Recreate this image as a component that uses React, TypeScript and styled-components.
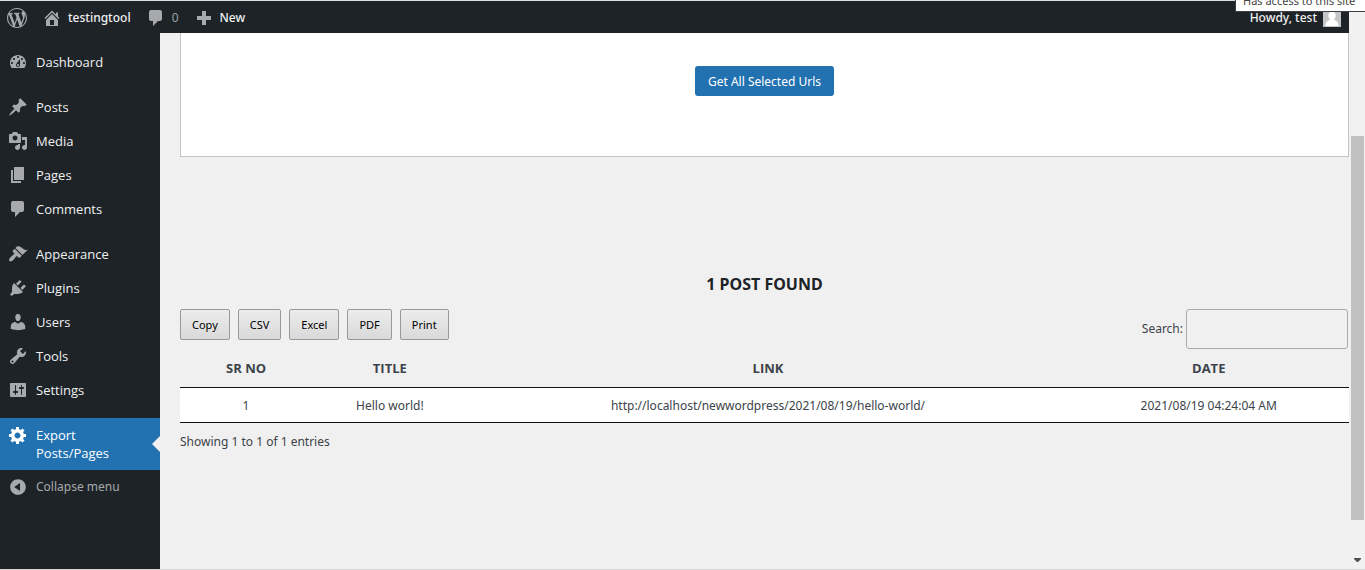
import React from "react";
import styled, { createGlobalStyle } from "styled-components";

const textFont = `"Noto Sans", "Open Sans", sans-serif`;
const menuFont = `"Open Sans", "Noto Sans", sans-serif`;

const GlobalStyle = createGlobalStyle`
  *, *::before, *::after { box-sizing: border-box; }
  body {
    margin: 0;
    background: #f0f0f1;
    color: #3c434a;
    font-family: ${textFont};
    font-size: 12px;
    line-height: 18px;
  }
  a { color: inherit; text-decoration: none; }
  ul { list-style: none; margin: 0; padding: 0; }
`;

const Window = styled.div`
  display: flex;
  min-height: 100vh;
  border-top: 1px solid #dcdfe1;
  border-bottom: 1px solid #d5d5d6;
  background: #f0f0f0;
`;

const Screen = styled.div`
  flex: 1;
  min-width: 0;
  display: flex;
  flex-direction: column;
`;

const AdminBar = styled.header`
  display: flex;
  align-items: center;
  height: 32px;
  padding: 1px 8px 0 7px;
  background: #1d2327;
  color: #f0f0f1;
`;

const BarLink = styled.a<{ $muted?: boolean }>`
  display: flex;
  align-items: center;
  gap: 6px;
  margin-right: 15px;
  font-weight: ${(p) => (p.$muted ? 400 : 500)};
  color: ${(p) => (p.$muted ? "#9ca2a7" : "#f0f0f1")};
  svg { color: #a7aaad; }
`;

const Account = styled(BarLink)`
  margin: 0 0 0 auto;
`;

const Avatar = styled.svg`
  display: block;
  width: 18px;
  height: 18px;
`;

const Glyph = styled.svg`
  display: block;
  flex: none;
  width: 20px;
  height: 20px;
  fill: currentColor;
`;

const Body = styled.div`
  flex: 1;
  display: flex;
`;

const Sidebar = styled.nav`
  flex: none;
  width: 160px;
  padding-top: 12px;
  background: #1d2327;
`;

const MenuGroup = styled.ul`
  margin-bottom: 11px;
`;

const menuRow = `
  position: relative;
  display: flex;
  align-items: flex-start;
  gap: 8px;
  width: 100%;
  padding: 8px 24px 8px 8px;
  border: 0;
  line-height: 18px;
  text-align: left;
`;

const MenuLink = styled.a<{ $current?: boolean }>`
  ${menuRow}
  font-family: ${menuFont};
  font-size: 13px;
  font-weight: 500;
  background: ${(p) => (p.$current ? "#2271b1" : "transparent")};
  color: ${(p) => (p.$current ? "#fff" : "#f0f0f1")};
  svg { margin: -1px 0; color: ${(p) => (p.$current ? "#fff" : "#a7aaad")}; }
  &::after {
    content: "";
    display: ${(p) => (p.$current ? "block" : "none")};
    position: absolute;
    right: 0;
    top: 18px;
    border: 8px solid transparent;
    border-left-width: 0;
    border-right-color: #f0f0f0;
  }
`;

const CollapseButton = styled.button`
  ${menuRow}
  font-family: inherit;
  font-size: 12px;
  background: transparent;
  color: #a7aaad;
  svg { margin: -1px 0; }
`;

const Content = styled.main`
  flex: 1;
  min-width: 0;
  padding-left: 20px;
`;

const Panel = styled.section`
  display: flex;
  justify-content: center;
  padding: 33px 0 60px;
  border: 1px solid #c3c4c7;
  border-top: 0;
  background: #fff;
`;

const PrimaryButton = styled.button`
  height: 30px;
  padding: 0 13px;
  border: 0;
  border-radius: 3px;
  background: #2271b1;
  color: #fff;
  font-family: inherit;
  font-size: 12px;
`;

const Heading = styled.h1`
  margin: 115px 0 13px;
  color: #1d2327;
  font-size: 16px;
  line-height: 24px;
  font-weight: 700;
  text-align: center;
`;

const Toolbar = styled.div`
  display: flex;
  justify-content: space-between;
  align-items: flex-start;
`;

const Exports = styled.div`
  display: flex;
  gap: 8px;
`;

const ExportButton = styled.button`
  height: 31px;
  padding: 0 11px;
  border: 1px solid #999;
  border-radius: 2px;
  background: linear-gradient(to bottom, #ececec 0%, #d9d9d9 100%);
  color: #000;
  font-family: inherit;
  font-size: 11px;
`;

const Search = styled.label`
  display: flex;
  align-items: center;
  gap: 3px;
  padding-right: 1px;
`;

const SearchInput = styled.input`
  width: 162px;
  height: 40px;
  padding: 5px;
  border: 1px solid #aaa;
  border-radius: 3px;
  background: transparent;
  font: inherit;
`;

const Table = styled.table`
  width: 100%;
  border-collapse: collapse;
  table-layout: fixed;
  text-align: center;
  border-bottom: 1px solid #111;
`;

const HeadCell = styled.th<{ $width: string }>`
  width: ${(p) => p.$width};
  padding: 10px;
  border-bottom: 1px solid #111;
  font-family: ${menuFont};
  font-size: 13px;
  font-weight: 700;
`;

const Cell = styled.td`
  padding: 9px 10px 7px;
  background: #fff;
`;

const Summary = styled.p`
  margin: 10px 0 0;
`;

const ScrollRail = styled.div`
  flex: none;
  display: flex;
  flex-direction: column;
  align-items: center;
  width: 16px;
  padding: 135px 1px 7px 2px;
  background: #f1f1f1;
`;

const ScrollThumb = styled.div`
  width: 13px;
  flex: 0 1 384px;
  background: #c1c1c1;
`;

const ScrollArrow = styled.svg`
  display: block;
  width: 7px;
  height: 4px;
  margin-top: auto;
  fill: #505050;
`;

const SiteTooltip = styled.div`
  position: fixed;
  top: 0;
  right: 0;
  display: flex;
  align-items: flex-end;
  width: 130px;
  height: 12px;
  padding-left: 7px;
  overflow: hidden;
  border-left: 1px solid #3c4043;
  border-bottom: 1px solid #3c4043;
  background: #fff;
  color: #444;
  font-size: 11px;
  line-height: 20px;
  white-space: nowrap;
`;

const icons = {
  wordpress:
    "M20 10c0-5.51-4.49-10-10-10C4.48 0 0 4.49 0 10c0 5.52 4.48 10 10 10 5.51 0 10-4.48 10-10zM7.78 15.37L4.37 6.22c.55-.02 1.17-.08 1.17-.08.5-.06.44-1.13-.06-1.11 0 0-1.45.11-2.37.11-.18 0-.37 0-.58-.01C4.12 2.69 6.87 1.11 10 1.11c2.33 0 4.45.87 6.05 2.34-.68-.11-1.65.39-1.65 1.58 0 .74.45 1.36.9 2.1.35.61.55 1.36.55 2.46 0 1.49-1.4 5-1.4 5l-3.03-8.37c.54-.02.82-.17.82-.17.5-.05.44-1.25-.06-1.22 0 0-1.44.12-2.38.12-.87 0-2.33-.12-2.33-.12-.5-.03-.56 1.2-.06 1.22l.92.08 1.26 3.41zM17.41 10c.24-.64.74-1.87.43-4.25.7 1.29 1.05 2.71 1.05 4.25 0 3.29-1.73 6.24-4.4 7.78.97-2.59 1.94-5.2 2.92-7.78zM6.1 18.09C3.12 16.65 1.11 13.53 1.11 10c0-1.3.23-2.48.72-3.59C3.25 10.3 4.67 14.2 6.1 18.09zm4.03-6.63l2.58 6.98c-.86.29-1.76.45-2.71.45-.79 0-1.57-.11-2.29-.33.81-2.38 1.62-4.74 2.42-7.1z",
  home: "M16 8.5l1.53 1.53-1.06 1.06L10 4.6l-6.47 6.49-1.06-1.06L10 2.5l4 4v-2h2v4zm-6-2.46l6 5.99V18H4v-5.97zM12 17v-5H8v5h4z",
  plus: "M17 8v4h-5v5H8v-5H3V8h5V3h4v5h5z",
  dashboard:
    "M3.76 16h12.48c1.1-1.37 1.76-3.11 1.76-5 0-4.42-3.58-8-8-8s-8 3.58-8 8c0 1.89.66 3.63 1.76 5zM10 4c.55 0 1 .45 1 1s-.45 1-1 1-1-.45-1-1 .45-1 1-1zM6 6c.55 0 1 .45 1 1s-.45 1-1 1-1-.45-1-1 .45-1 1-1zm8 0c.55 0 1 .45 1 1s-.45 1-1 1-1-.45-1-1 .45-1 1-1zm-5.37 5.55L12 7v6c0 1.1-.9 2-2 2s-2-.9-2-2c0-.57.24-1.08.63-1.45zM4 10c.55 0 1 .45 1 1s-.45 1-1 1-1-.45-1-1 .45-1 1-1zm12 0c.55 0 1 .45 1 1s-.45 1-1 1-1-.45-1-1 .45-1 1-1zm-5 3c0-.55-.45-1-1-1s-1 .45-1 1 .45 1 1 1 1-.45 1-1z",
  posts:
    "M10.44 3.02l1.82-1.82 6.36 6.35-1.83 1.82c-1.05-.68-2.48-.57-3.41.36l-.75.75c-.92.93-1.04 2.35-.35 3.41l-1.83 1.82-2.41-2.41-2.8 2.79c-.42.42-3.38 2.71-3.8 2.29s1.86-3.39 2.28-3.81l2.79-2.79L4.1 9.36l1.83-1.82c1.05.69 2.48.57 3.4-.36l.75-.75c.93-.92 1.05-2.35.36-3.41z",
  media:
    "M13 11V4c0-.55-.45-1-1-1h-1.67L9 1H5L3.67 3H2c-.55 0-1 .45-1 1v7c0 .55.45 1 1 1h10c.55 0 1-.45 1-1zM7 4.5c1.38 0 2.5 1.12 2.5 2.5S8.38 9.5 7 9.5 4.5 8.38 4.5 7 5.62 4.5 7 4.5zM14 6h5v10.5c0 1.38-1.12 2.5-2.5 2.5S14 17.88 14 16.5s1.12-2.5 2.5-2.5c.17 0 .34.02.5.05V9h-3V6zm-4 8.05V13h2v3.5c0 1.38-1.12 2.5-2.5 2.5S7 17.88 7 16.5 8.12 14 9.5 14c.17 0 .34.02.5.05z",
  pages: "M6 15V2h10v13H6zm-1 1h8v2H3V5h2v11z",
  comments:
    "M5 2h9c1.1 0 2 .9 2 2v7c0 1.1-.9 2-2 2h-2l-5 5v-5H5c-1.1 0-2-.9-2-2V4c0-1.1.9-2 2-2z",
  appearance:
    "M14.48 11.06L7.41 3.99l1.5-1.5c.5-.56 2.3-.47 3.51.32 1.21.8 1.43 1.28 2.91 2.1 1.18.64 2.45 1.26 4.45.85zm-.71.71L6.7 4.7 4.93 6.47c-.39.39-.39 1.02 0 1.41l1.06 1.06c.39.39.39 1.03 0 1.42-.6.6-1.43 1.11-2.21 1.69-.35.26-.7.53-1.01.84C1.43 14.23.4 16.08 1.4 17.07c.99 1 2.84-.03 4.18-1.36.31-.31.58-.66.85-1.02.57-.78 1.08-1.61 1.69-2.21.39-.39 1.02-.39 1.41 0l1.06 1.06c.39.39 1.02.39 1.41 0z",
  plugins:
    "M13.11 4.36L9.87 7.6 8 5.73l3.24-3.24c.35-.34 1.05-.2 1.56.32.52.51.66 1.21.31 1.55zm-8 1.77l.91-1.12 9.01 9.01-1.19.84c-.71.71-2.63 1.16-3.82 1.16H6.14L4.9 17.26c-.59.59-1.54.59-2.12 0-.59-.58-.59-1.53 0-2.12l1.24-1.24v-3.88c0-1.13.4-3.19 1.09-3.89zm7.26 3.97l3.24-3.24c.34-.35 1.04-.21 1.55.31.52.51.66 1.21.31 1.55l-3.24 3.25z",
  users:
    "M10 9.25c-2.27 0-2.73-3.44-2.73-3.44C7 4.02 7.82 2 9.97 2c2.16 0 2.98 2.02 2.71 3.81 0 0-.41 3.44-2.68 3.44zm0 2.57L12.72 10c2.39 0 4.52 2.33 4.52 4.53v2.49s-3.65 1.13-7.24 1.13c-3.65 0-7.24-1.13-7.24-1.13v-2.49c0-2.25 1.94-4.48 4.47-4.48z",
  tools:
    "M16.68 9.77c-1.34 1.34-3.3 1.67-4.95.99l-5.41 6.52c-.99.99-2.59.99-3.58 0s-.99-2.59 0-3.57l6.52-5.42c-.68-1.65-.35-3.61.99-4.95 1.28-1.28 3.12-1.62 4.72-1.06l-2.89 2.89 2.82 2.82 2.86-2.87c.53 1.58.18 3.39-1.08 4.65zM3.81 16.21c.4.39 1.04.39 1.43 0 .4-.4.4-1.04 0-1.43-.39-.4-1.03-.4-1.43 0-.39.39-.39 1.03 0 1.43z",
  settings:
    "M18 16V4c0-.55-.45-1-1-1H3c-.55 0-1 .45-1 1v12c0 .55.45 1 1 1h14c.55 0 1-.45 1-1zM8 11h1c.55 0 1 .45 1 1s-.45 1-1 1H8v1.5c0 .28-.22.5-.5.5s-.5-.22-.5-.5V13H6c-.55 0-1-.45-1-1s.45-1 1-1h1V5.5c0-.28.22-.5.5-.5s.5.22.5.5V11zm5-2h-1c-.55 0-1-.45-1-1s.45-1 1-1h1V5.5c0-.28.22-.5.5-.5s.5.22.5.5V7h1c.55 0 1 .45 1 1s-.45 1-1 1h-1v5.5c0 .28-.22.5-.5.5s-.5-.22-.5-.5V9z",
  generic:
    "M18 12h-2.18c-.17.7-.44 1.35-.81 1.93l1.54 1.54-2.1 2.1-1.54-1.54c-.58.36-1.23.63-1.91.79V19H8v-2.18c-.68-.16-1.33-.43-1.91-.79l-1.54 1.54-2.12-2.12 1.54-1.54c-.36-.58-.63-1.23-.79-1.91H1V9.03h2.17c.16-.7.44-1.35.8-1.94L2.43 5.55l2.1-2.1 1.54 1.54c.58-.37 1.24-.64 1.93-.81V2h3v2.18c.68.16 1.33.43 1.91.79l1.54-1.54 2.12 2.12-1.54 1.54c.36.59.64 1.24.8 1.94H18V12zm-8.5 1.5c1.66 0 3-1.34 3-3s-1.34-3-3-3-3 1.34-3 3 1.34 3 3 3z",
  collapse:
    "M10 2.16c4.33 0 7.84 3.51 7.84 7.84s-3.51 7.84-7.84 7.84S2.16 14.33 2.16 10 5.71 2.16 10 2.16zm2 11.72V6.12L6.18 9.97z",
};

type IconName = keyof typeof icons;

function Icon({ name }: { name: IconName }) {
  return (
    <Glyph viewBox="0 0 20 20" aria-hidden="true">
      <path d={icons[name]} fillRule={name === "collapse" ? "evenodd" : "nonzero"} />
    </Glyph>
  );
}

const menu: { icon: IconName; label: string }[][] = [
  [{ icon: "dashboard", label: "Dashboard" }],
  [
    { icon: "posts", label: "Posts" },
    { icon: "media", label: "Media" },
    { icon: "pages", label: "Pages" },
    { icon: "comments", label: "Comments" },
  ],
  [
    { icon: "appearance", label: "Appearance" },
    { icon: "plugins", label: "Plugins" },
    { icon: "users", label: "Users" },
    { icon: "tools", label: "Tools" },
    { icon: "settings", label: "Settings" },
  ],
];

const columns = [
  { label: "SR NO", width: "11.3%" },
  { label: "TITLE", width: "13.3%" },
  { label: "LINK", width: "51.4%" },
  { label: "DATE", width: "24%" },
];

const posts = [
  ["1", "Hello world!", "http://localhost/newwordpress/2021/08/19/hello-world/", "2021/08/19 04:24:04 AM"],
];

export default function App() {
  return (
    <>
      <GlobalStyle />
      <Window>
        <Screen>
          <AdminBar>
            <BarLink href="#" aria-label="About WordPress">
              <Icon name="wordpress" />
            </BarLink>
            <BarLink href="#">
              <Icon name="home" />
              testingtool
            </BarLink>
            <BarLink href="#" $muted aria-label="0 comments">
              <Icon name="comments" />
              0
            </BarLink>
            <BarLink href="#">
              <Icon name="plus" />
              New
            </BarLink>
            <Account href="#">
              Howdy, test
              <Avatar viewBox="0 0 18 18" aria-hidden="true">
                <rect width="18" height="18" fill="#c5c5c5" />
                <path d="M9 2.5c2.3 0 3.7 1.7 3.7 4 0 1.5-.6 2.8-1.5 3.6v1c2.5.8 4.3 1.9 4.3 5.9h-13c0-4 1.8-5.1 4.3-5.9v-1C5.9 9.3 5.3 8 5.3 6.5c0-2.3 1.4-4 3.7-4z" fill="#fff" />
              </Avatar>
            </Account>
          </AdminBar>
          <Body>
            <Sidebar aria-label="Main menu">
              {menu.map((group, i) => (
                <MenuGroup key={i}>
                  {group.map((item) => (
                    <li key={item.label}>
                      <MenuLink href="#">
                        <Icon name={item.icon} />
                        {item.label}
                      </MenuLink>
                    </li>
                  ))}
                </MenuGroup>
              ))}
              <MenuLink href="#" $current aria-current="page">
                <Icon name="generic" />
                Export Posts/Pages
              </MenuLink>
              <CollapseButton type="button">
                <Icon name="collapse" />
                Collapse menu
              </CollapseButton>
            </Sidebar>
            <Content>
              <Panel>
                <PrimaryButton type="button">Get All Selected Urls</PrimaryButton>
              </Panel>
              <Heading>1 POST FOUND</Heading>
              <Toolbar>
                <Exports>
                  {["Copy", "CSV", "Excel", "PDF", "Print"].map((label) => (
                    <ExportButton type="button" key={label}>
                      {label}
                    </ExportButton>
                  ))}
                </Exports>
                <Search>
                  Search:
                  <SearchInput type="search" />
                </Search>
              </Toolbar>
              <Table>
                <thead>
                  <tr>
                    {columns.map((c) => (
                      <HeadCell key={c.label} $width={c.width} scope="col">
                        {c.label}
                      </HeadCell>
                    ))}
                  </tr>
                </thead>
                <tbody>
                  {posts.map((row) => (
                    <tr key={row[0]}>
                      {row.map((value) => (
                        <Cell key={value}>{value}</Cell>
                      ))}
                    </tr>
                  ))}
                </tbody>
              </Table>
              <Summary>Showing 1 to 1 of 1 entries</Summary>
            </Content>
          </Body>
        </Screen>
        <ScrollRail aria-hidden="true">
          <ScrollThumb />
          <ScrollArrow viewBox="0 0 7 4">
            <path d="M0 0h7v1L4 4H3L0 1z" />
          </ScrollArrow>
        </ScrollRail>
      </Window>
      <SiteTooltip role="tooltip">Has access to this site</SiteTooltip>
    </>
  );
}
